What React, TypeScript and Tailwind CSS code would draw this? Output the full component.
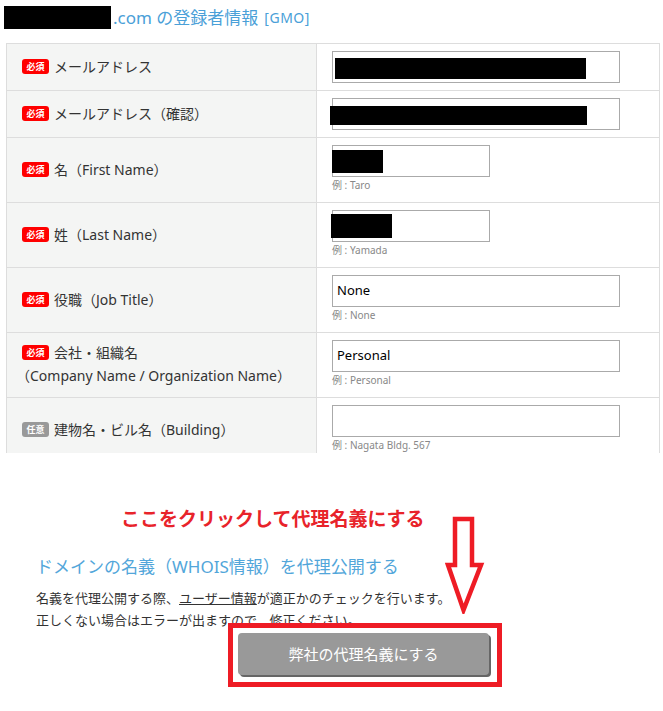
const Badge = ({ optional }: { optional?: boolean }) => (
  <span
    className={
      "inline-flex h-[15px] w-[27px] shrink-0 items-center justify-center rounded-[3px] text-[9px] font-bold leading-none text-white " +
      (optional ? "bg-[#999]" : "bg-[#f00]")
    }
  >
    {optional ? "任意" : "必須"}
  </span>
);

type Row = {
  label: string;
  label2?: string;
  optional?: boolean;
  height: string;
  wide: boolean;
  value?: string;
  redact?: string;
  hint?: string;
};

const rows: Row[] = [
  { label: "メールアドレス", height: "h-[47px]", wide: true, redact: "left-[2px] top-[6px] h-[21px] w-[251px]" },
  { label: "メールアドレス（確認）", height: "h-[47px]", wide: true, redact: "left-[-3px] top-[7px] h-[19px] w-[257px]" },
  { label: "名（First Name）", height: "h-[65px]", wide: false, redact: "left-[-1px] top-[4px] h-[23px] w-[51px]", hint: "例 : Taro" },
  { label: "姓（Last Name）", height: "h-[65px]", wide: false, redact: "left-[-2px] top-[3px] h-[24px] w-[61px]", hint: "例 : Yamada" },
  { label: "役職（Job Title）", height: "h-[65px]", wide: true, value: "None", hint: "例 : None" },
  {
    label: "会社・組織名",
    label2: "（Company Name / Organization Name）",
    height: "h-[65px]",
    wide: true,
    value: "Personal",
    hint: "例 : Personal",
  },
  { label: "建物名・ビル名（Building）", optional: true, height: "h-[65px]", wide: true, hint: "例 : Nagata Bldg. 567" },
];

export default function App() {
  return (
    <div
      className="relative h-[711px] w-[663px] overflow-hidden bg-white text-[#333]"
      style={{ fontFamily: '"Noto Sans", "Noto Sans CJK JP", sans-serif' }}
    >
      {/* title */}
      <div className="flex h-[43px] items-start pl-[4px] pt-[6px]">
        <span className="h-[23px] w-[107px] bg-black" />
        <span className="ml-[2px] text-[17px] leading-[23px] text-[#4aa0d8]">.com の登録者情報</span>
        <span className="ml-[6px] text-[14px] leading-[23px] tracking-[0.5px] text-[#4aa0d8]">[GMO]</span>
      </div>

      {/* form table */}
      <div className="ml-[6px] h-[410px] w-[654px] overflow-hidden border-x border-t border-[#ddd]">
        {rows.map((r, i) => (
          <div key={i} className={"grid grid-cols-[310px_1fr] border-b border-[#ddd] " + r.height}>
            <div className="flex flex-col justify-center border-r border-[#ddd] bg-[#f4f5f4] pb-[2px] pl-[15px] text-[14px] leading-[23px]">
              <div className="flex items-center gap-[5px]">
                <Badge optional={r.optional} />
                <span>{r.label}</span>
              </div>
              {r.label2 && <div className="-ml-[6px]">{r.label2}</div>}
            </div>
            <div className="pl-[15px] pt-[7px]">
              <div
                className={
                  "relative flex h-[32px] items-center border border-[#aaa] bg-white pl-[4px] text-[13px] text-black " +
                  (r.wide ? "w-[288px]" : "w-[158px]")
                }
              >
                {r.value}
                {r.redact && <span className={"absolute bg-black " + r.redact} />}
              </div>
              {r.hint && <div className="mt-[2px] text-[10px] leading-[12px] text-[#888]">{r.hint}</div>}
            </div>
          </div>
        ))}
      </div>

      {/* proxy section */}
      <div className="pt-[55px]">
        <div className="pl-[121px] text-[19px] font-bold leading-[22px] text-[#e8232a]">
          ここをクリックして代理名義にする
        </div>
        <div className="mt-[26px] pl-[36px] text-[17px] leading-[22px] text-[#52a6da]">
          ドメインの名義（WHOIS情報）を代理公開する
        </div>
        <div className="mt-[9px] pl-[36px] text-[13px] leading-[22px]">
          <div>
            名義を代理公開する際、<span className="underline">ユーザー情報</span>が適正かのチェックを行います。
          </div>
          <div>正しくない場合はエラーが出ますので、修正ください。</div>
        </div>
      </div>

      {/* arrow annotation */}
      <svg className="absolute left-[445px] top-[516px]" width="42" height="98" viewBox="0 0 42 98">
        <path
          d="M10 3 H27 V49 H36 L18.5 94 L3 49 H10 Z"
          fill="none"
          stroke="#ee1c25"
          strokeWidth="4.5"
          strokeLinejoin="miter"
        />
      </svg>

      {/* highlighted button */}
      <div className="absolute left-[228px] top-[623px] flex h-[64px] w-[274px] items-start border-[5px] border-[#ee1c25] bg-white pl-[5px] pt-[5px]">
        <div className="flex h-[42px] w-[251px] items-center justify-center rounded-[4px] bg-[#999] text-[15px] text-white shadow-[2px_2px_0_#666]">
          弊社の代理名義にする
        </div>
      </div>
    </div>
  );
}
